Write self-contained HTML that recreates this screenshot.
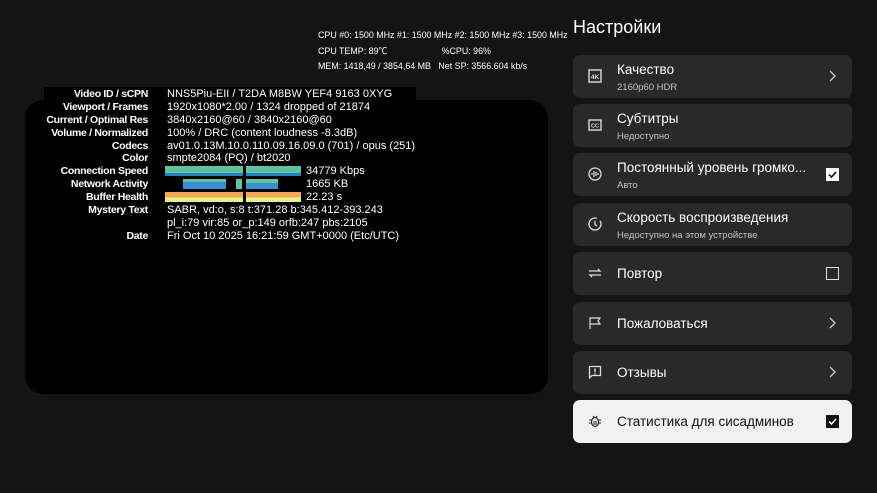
<!DOCTYPE html>
<html><head><meta charset="utf-8"><style>
*{margin:0;padding:0;box-sizing:border-box}
body{width:877px;height:493px;background:#141414;position:relative;overflow:hidden;font-family:"Liberation Sans","Noto Sans CJK SC",sans-serif;color:#fff}
.box{position:absolute;left:25px;top:100px;width:523px;height:294px;background:#000;border-radius:18px}
.strip{position:absolute;left:44px;top:87px;width:372px;height:14px;background:#000}
.stats{position:absolute;left:0;top:88px;width:877px;font-size:11px;line-height:12.9px}
.row{position:relative;height:12.9px;white-space:nowrap;width:877px}
.l{position:absolute;right:729px;font-weight:bold;text-align:right;font-size:10.5px;letter-spacing:-0.3px}
.v{position:absolute;left:167px}
.bar{position:absolute;height:10px;top:1px}
.cpu{position:absolute;left:318px;top:28px;font-size:8.9px;line-height:15.5px;white-space:pre}
h1{position:absolute;left:573px;top:17px;font-size:18px;font-weight:normal}
.card{position:absolute;left:573px;width:279px;height:43px;background:#292929;border-radius:7px}
.card .t{position:absolute;left:44px;font-size:13.5px}
.card .s{position:absolute;left:44px;top:27px;font-size:9.5px;color:#c4c4c4}
.ic{position:absolute;left:15px;top:14px;width:14px;height:14px}
.chev{position:absolute;right:16px;top:15px;width:7px;height:12px}
.cb{position:absolute;right:13px;top:15px;width:13px;height:13px;border:1.5px solid #ddd}
</style></head><body>
<div class="strip"></div>
<div class="box"></div>
<div class="stats">
<div class="row"><span class="l">Video ID / sCPN</span><span class="v">NNS5Piu-EII / T2DA M8BW YEF4 9163 0XYG</span></div>
<div class="row"><span class="l">Viewport / Frames</span><span class="v">1920x1080*2.00 / 1324 dropped of 21874</span></div>
<div class="row"><span class="l">Current / Optimal Res</span><span class="v">3840x2160@60 / 3840x2160@60</span></div>
<div class="row"><span class="l">Volume / Normalized</span><span class="v">100% / DRC (content loudness -8.3dB)</span></div>
<div class="row"><span class="l">Codecs</span><span class="v">av01.0.13M.10.0.110.09.16.09.0 (701) / opus (251)</span></div>
<div class="row"><span class="l">Color</span><span class="v">smpte2084 (PQ) / bt2020</span></div>
<div class="row"><span class="l">Connection Speed</span>
<div class="bar" style="left:165px;width:78px;background:linear-gradient(#5fc3a0 70%,#2a7fc0 70%)"></div>
<div class="bar" style="left:246px;width:55px;background:linear-gradient(#5fc3a0 70%,#2a7fc0 70%)"></div>
<span class="v" style="left:306px">34779 Kbps</span></div>
<div class="row"><span class="l">Network Activity</span>
<div class="bar" style="left:183px;width:43px;background:linear-gradient(#5fc3a0 30%,#3a8ed0 30%)"></div>
<div class="bar" style="left:236px;width:6px;background:#5fc3a0"></div>
<div class="bar" style="left:246px;width:32px;background:linear-gradient(#5fc3a0 40%,#3a8ed0 40%)"></div>
<span class="v" style="left:306px">1665 KB</span></div>
<div class="row"><span class="l">Buffer Health</span>
<div class="bar" style="left:165px;width:78px;background:linear-gradient(#f7a65a 55%,#e8f08a 55%)"></div>
<div class="bar" style="left:246px;width:55px;background:linear-gradient(#f7a65a 55%,#e8f08a 55%)"></div>
<span class="v" style="left:306px">22.23 s</span></div>
<div class="row"><span class="l">Mystery Text</span><span class="v">SABR, vd:o, s:8 t:371.28 b:345.412-393.243</span></div>
<div class="row"><span class="v">pl_i:79 vir:85 or_p:149 orfb:247 pbs:2105</span></div>
<div class="row"><span class="l">Date</span><span class="v">Fri Oct 10 2025 16:21:59 GMT+0000 (Etc/UTC)</span></div>
</div>
<div class="cpu">CPU #0: 1500 MHz #1: 1500 MHz #2: 1500 MHz #3: 1500 MHz
CPU TEMP: 89℃                      %CPU: 96%
MEM: 1418,49 / 3854,64 MB   Net SP: 3566.604 kb/s</div>
<h1>Настройки</h1>

<div class="card" style="top:55px"><svg class="ic" viewBox="0 0 14 14"><rect x="1" y="1" width="12" height="12" fill="none" stroke="#ddd" stroke-width="1.4"/><text x="7" y="10" font-size="6.5" font-weight="bold" fill="#ddd" text-anchor="middle" font-family="Liberation Sans">4K</text></svg><div class="t" style="top:7px">Качество</div><div class="s">2160p60 HDR</div><svg class="chev" viewBox="0 0 7 12"><path d="M1 1l5 5-5 5" fill="none" stroke="#ccc" stroke-width="1.3"/></svg></div>

<div class="card" style="top:104px"><svg class="ic" viewBox="0 0 14 14"><rect x="1" y="2" width="12" height="10" fill="none" stroke="#ddd" stroke-width="1.4"/><text x="7" y="9.5" font-size="5.5" font-weight="bold" fill="#ddd" text-anchor="middle" font-family="Liberation Sans">CC</text></svg><div class="t" style="top:7px">Субтитры</div><div class="s">Недоступно</div></div>

<div class="card" style="top:153px"><svg class="ic" viewBox="0 0 14 14"><circle cx="7" cy="7" r="6" fill="none" stroke="#ddd" stroke-width="1.3"/><path d="M4 6v2M6 4v6M8 5v4M10 6v2" stroke="#ddd" stroke-width="1.2"/></svg><div class="t" style="top:7px">Постоянный уровень громко...</div><div class="s">Авто</div><svg class="cb" style="border:none" viewBox="0 0 13 13"><rect width="13" height="13" fill="#fff"/><path d="M3 6.5l2.5 2.5 4.5-5" fill="none" stroke="#000" stroke-width="1.5"/></svg></div>

<div class="card" style="top:203px"><svg class="ic" viewBox="0 0 14 14"><circle cx="7" cy="7" r="6" fill="none" stroke="#ddd" stroke-width="1.3" stroke-dasharray="30 4"/><path d="M7 4v3.5l2 1.5" fill="none" stroke="#ddd" stroke-width="1.3"/></svg><div class="t" style="top:7px">Скорость воспроизведения</div><div class="s">Недоступно на этом устройстве</div></div>

<div class="card" style="top:252px"><svg class="ic" viewBox="0 0 14 14"><path d="M1 5h11l-2-2M13 9H2l2 2" fill="none" stroke="#ddd" stroke-width="1.3"/></svg><div class="t" style="top:14px">Повтор</div><div class="cb"></div></div>

<div class="card" style="top:302px"><svg class="ic" viewBox="0 0 14 14"><path d="M2 13V2h10l-2 3 2 3H2" fill="none" stroke="#ddd" stroke-width="1.2"/></svg><div class="t" style="top:14px">Пожаловаться</div><svg class="chev" viewBox="0 0 7 12"><path d="M1 1l5 5-5 5" fill="none" stroke="#ccc" stroke-width="1.3"/></svg></div>

<div class="card" style="top:351px"><svg class="ic" viewBox="0 0 14 14"><path d="M1.5 13V1.5h11v9H4z" fill="none" stroke="#ddd" stroke-width="1.3"/><path d="M7 3.5v4M7 8.5v1.2" stroke="#ddd" stroke-width="1.4"/></svg><div class="t" style="top:14px">Отзывы</div><svg class="chev" viewBox="0 0 7 12"><path d="M1 1l5 5-5 5" fill="none" stroke="#ccc" stroke-width="1.3"/></svg></div>

<div class="card" style="top:400px;background:#f1f1f1;color:#111"><svg class="ic" viewBox="0 0 14 14"><ellipse cx="7" cy="8" rx="3.5" ry="4.5" fill="none" stroke="#222" stroke-width="1.2"/><path d="M1 6h2.5M1 9h2.5M10.5 6H13M10.5 9H13M5 8h4M5 10h4M5 2l1 1.5M9 2l-1 1.5" stroke="#222" stroke-width="1.1"/></svg><div class="t" style="top:14px;color:#111">Статистика для сисадминов</div><svg class="cb" style="border:none" viewBox="0 0 13 13"><rect width="13" height="13" fill="#111"/><path d="M3 6.5l2.5 2.5 4.5-5" fill="none" stroke="#fff" stroke-width="1.5"/></svg></div>
</body></html>
